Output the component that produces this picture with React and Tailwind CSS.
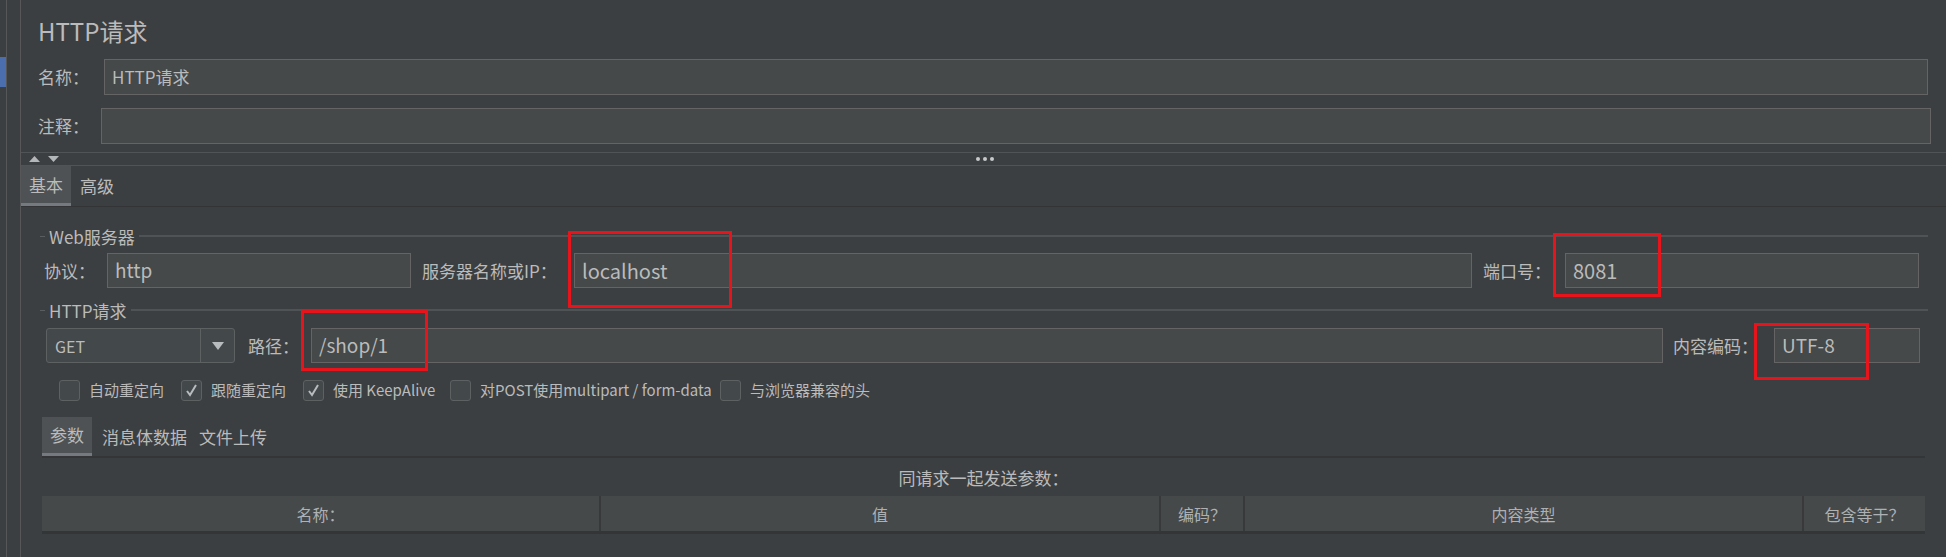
import React from "react";

const font = { fontFamily: '"Noto Sans CJK SC", "Noto Sans", sans-serif' };

function Field({ value, className, size = "text-[19px]" }) {
  return (
    <div
      className={`h-full bg-[#45494a] border border-[#646464] flex items-center pl-[7px] ${size} text-[#bbbbbb] ${className}`}
    >
      {value}
    </div>
  );
}

function GroupTitle({ title }) {
  return (
    <div className="flex items-center h-[22px]">
      <div className="ml-[19px] w-[5px] border-t border-[#5a5d5f]" />
      <div className="px-[4px] text-[17px] text-[#bbbbbb] leading-none">{title}</div>
      <div className="flex-1 mr-[18px] border-t-2 border-[#505355]" />
    </div>
  );
}

function Check({ checked, label, w }) {
  return (
    <div className={`flex items-center ${w}`}>
      <div className="w-[21px] h-[21px] rounded-[3px] border border-[#5e6162] bg-[#43494a] flex items-center justify-center">
        {checked && (
          <svg width="13" height="13" viewBox="0 0 13 13">
            <polyline
              points="2,7 5,11 11,1"
              fill="none"
              stroke="#b9bcbe"
              strokeWidth="2"
            />
          </svg>
        )}
      </div>
      <span className="ml-[9px] text-[15px] text-[#bbbbbb]">{label}</span>
    </div>
  );
}

export default function App() {
  const cols = [
    ["名称：", "w-[559px]"],
    ["值", "w-[560px]"],
    ["编码？", "w-[84px]"],
    ["内容类型", "w-[559px]"],
    ["包含等于？", "flex-1"],
  ];
  return (
    <div
      className="relative w-[1946px] h-[557px] bg-[#3c3f41] flex overflow-hidden"
      style={font}
    >
      {/* left tree strip */}
      <div className="w-[21px] flex shrink-0">
        <div className="w-[7px] border-r border-[#555758] pt-[57px]">
          <div className="h-[30px] bg-[#4b6eaf]" />
        </div>
        <div className="flex-1 border-r border-[#555758]" />
      </div>

      <div className="flex-1 flex flex-col">
        {/* title */}
        <div className="h-[55px] pt-[14px] pl-[17px] text-[24px] leading-[34px] text-[#bbbbbb]">
          HTTP请求
        </div>

        <div className="mt-[4px] h-[36px] flex pr-[18px]">
          <div className="w-[83px] pl-[17px] flex items-center text-[17px] text-[#bbbbbb]">
            名称：
          </div>
          <Field value="HTTP请求" className="flex-1" size="text-[17px]" />
        </div>

        <div className="mt-[13px] h-[36px] flex pr-[15px]">
          <div className="w-[80px] pl-[17px] flex items-center text-[17px] text-[#bbbbbb]">
            注释：
          </div>
          <Field value="" className="flex-1" />
        </div>

        {/* splitter */}
        <div className="mt-[8px] h-[14px] border-t border-b border-[#515456] relative flex items-center">
          <div className="ml-[8px] flex gap-[8px]">
            <svg width="11" height="6" viewBox="0 0 11 6">
              <polygon points="0,6 11,6 5.5,0" fill="#b4b7b9" />
            </svg>
            <svg width="11" height="6" viewBox="0 0 11 6">
              <polygon points="0,0 11,0 5.5,6" fill="#b4b7b9" />
            </svg>
          </div>
          <div className="absolute left-[955px] top-[4px] flex gap-[3px]">
            <div className="w-[4px] h-[4px] rounded-full bg-[#c7c9ca]" />
            <div className="w-[4px] h-[4px] rounded-full bg-[#c7c9ca]" />
            <div className="w-[4px] h-[4px] rounded-full bg-[#c7c9ca]" />
          </div>
        </div>

        {/* tabs */}
        <div className="h-[41px] flex border-b border-[#323435] text-[17px] text-[#bbbbbb]">
          <div className="w-[50px] bg-[#4e5254] border-b-[3px] border-[#747a80] flex items-center justify-center">
            基本
          </div>
          <div className="pl-[9px] flex items-center">高级</div>
        </div>

        {/* Web server */}
        <div className="mt-[18px]">
          <GroupTitle title="Web服务器" />
        </div>
        <div className="mt-[6px] h-[35px] flex text-[17px] text-[#bbbbbb]">
          <div className="w-[86px] pl-[23px] flex items-center">协议：</div>
          <Field value="http" className="w-[304px]" />
          <div className="w-[163px] pl-[11px] flex items-center">服务器名称或IP：</div>
          <Field value="localhost" className="w-[898px]" size="text-[20px]" />
          <div className="w-[93px] pl-[11px] flex items-center">端口号：</div>
          <Field value="8081" className="w-[354px]" size="text-[20px]" />
        </div>

        {/* HTTP request */}
        <div className="mt-[11px]">
          <GroupTitle title="HTTP请求" />
        </div>
        <div className="mt-[7px] h-[35px] flex text-[17px] text-[#bbbbbb]">
          <div className="ml-[25px] w-[189px] h-full rounded-[3px] border border-[#5e6162] bg-[#43494a] flex">
            <div className="flex-1 pl-[8px] flex items-center text-[16px]">GET</div>
            <div className="w-[34px] border-l border-[#5e6162] flex items-center justify-center">
              <svg width="12" height="8" viewBox="0 0 12 8">
                <polygon points="0,0 12,0 6,8" fill="#b9bcbe" />
              </svg>
            </div>
          </div>
          <div className="w-[76px] pl-[13px] flex items-center">路径：</div>
          <Field value="/shop/1" className="w-[1352px]" />
          <div className="w-[111px] pl-[10px] flex items-center">内容编码：</div>
          <Field value="UTF-8" className="w-[146px]" />
        </div>

        {/* options */}
        <div className="mt-[17px] h-[21px] flex pl-[38px]">
          <Check label="自动重定向" w="w-[122px]" />
          <Check checked label="跟随重定向" w="w-[122px]" />
          <Check checked label="使用 KeepAlive" w="w-[147px]" />
          <Check label="对POST使用multipart / form-data" w="w-[270px]" />
          <Check label="与浏览器兼容的头" w="w-[200px]" />
        </div>

        {/* inner tabs */}
        <div className="mt-[16px] ml-[21px] mr-[21px] h-[41px] flex border-b-2 border-[#333536] text-[17px] text-[#bbbbbb]">
          <div className="w-[50px] bg-[#4e5254] border-b-[3px] border-[#747a80] flex items-center justify-center">
            参数
          </div>
          <div className="pl-[10px] flex items-center">消息体数据</div>
          <div className="pl-[12px] flex items-center">文件上传</div>
        </div>

        <div className="ml-[21px] mr-[21px] h-[38px] pt-[2px] flex items-center justify-center text-[17px] text-[#bbbbbb]">
          同请求一起发送参数：
        </div>

        <div className="ml-[21px] mr-[21px] h-[38px] flex bg-[#45494a] border-b-[3px] border-[#333536]">
          {cols.map(([name, w], i) => (
            <div
              key={name}
              className={`${w} flex items-center justify-center text-[16px] text-[#aeb1b3] ${
                i < cols.length - 1 ? "border-r-2 border-[#37393b]" : ""
              }`}
            >
              {name}
            </div>
          ))}
        </div>
      </div>

      {/* red annotation boxes */}
      <div className="absolute left-[568px] top-[231px] w-[164px] h-[77px] border-[3px] border-[#e8141c]" />
      <div className="absolute left-[1553px] top-[233px] w-[108px] h-[64px] border-[3px] border-[#e8141c]" />
      <div className="absolute left-[301px] top-[310px] w-[127px] h-[61px] border-[3px] border-[#e8141c]" />
      <div className="absolute left-[1754px] top-[323px] w-[115px] h-[57px] border-[3px] border-[#e8141c]" />
    </div>
  );
}
